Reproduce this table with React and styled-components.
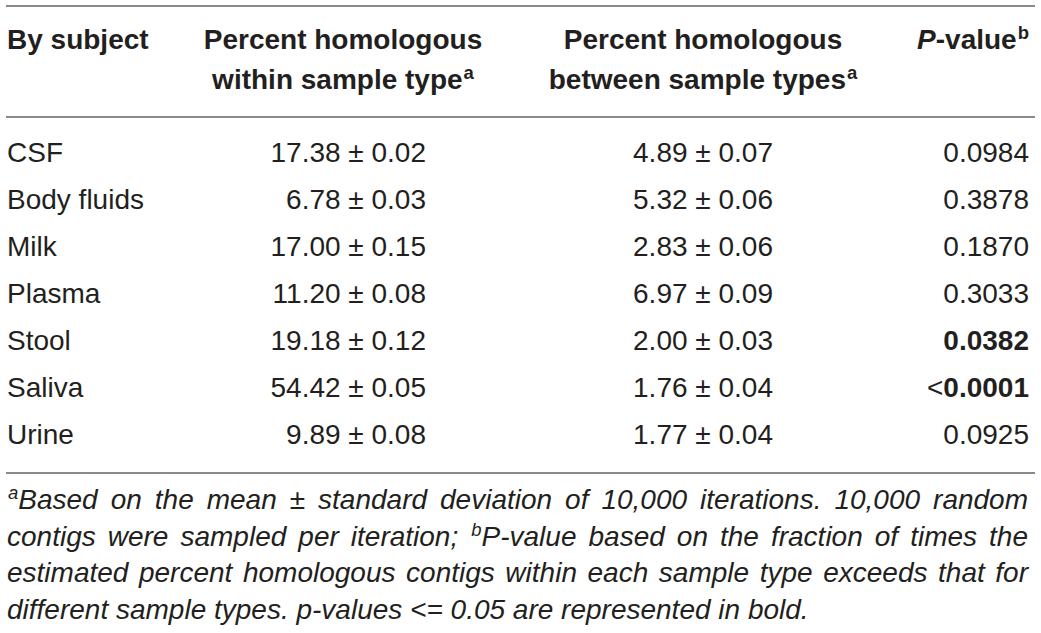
import styled, { createGlobalStyle } from "styled-components";

const GlobalStyle = createGlobalStyle`
  body {
    margin: 0;
    background: #ffffff;
    font-family: "Liberation Sans", Arial, Helvetica, sans-serif;
    color: #231f20;
  }
`;

const Wrapper = styled.div`
  width: 1029px;
  margin-left: 6px;
  padding-top: 5px;
`;

const Row = styled.div`
  display: grid;
  grid-template-columns: 186px 300px 420px 1fr;
  padding: 0 6px 0 1px;
  font-size: 28px;
  white-space: nowrap;
`;

const HeadRow = styled(Row)`
  border-top: 2px solid #8a8a8a;
  border-bottom: 2px solid #8a8a8a;
  padding-top: 13px;
  padding-bottom: 16px;
  line-height: 40px;
  font-weight: bold;
`;

const Body = styled.div`
  padding: 11px 0 14px;
  border-bottom: 2px solid #8a8a8a;
`;

const DataRow = styled(Row)`
  line-height: 47px;
`;

const Cell = styled.div`
  text-align: ${(p) => p.$align || "left"};
  padding-right: ${(p) => p.$pr || 0}px;
`;

const Sup = styled.sup`
  font-size: 0.66em;
  line-height: 0;
  vertical-align: 0.55em;
  margin-left: 1px;
`;

const Strong = styled.span`
  font-weight: bold;
`;

const Note = styled.div`
  padding: 8px 7px 0 1px;
  font-size: 28px;
  line-height: 36.7px;
  font-style: italic;
`;

const NoteLine = styled.div`
  text-align: justify;
  text-align-last: ${(p) => (p.$last ? "left" : "justify")};
  white-space: nowrap;
`;

const rows = [
  ["CSF", "17.38 ± 0.02", "4.89 ± 0.07", "0.0984"],
  ["Body fluids", "6.78 ± 0.03", "5.32 ± 0.06", "0.3878"],
  ["Milk", "17.00 ± 0.15", "2.83 ± 0.06", "0.1870"],
  ["Plasma", "11.20 ± 0.08", "6.97 ± 0.09", "0.3033"],
  ["Stool", "19.18 ± 0.12", "2.00 ± 0.03", <Strong>0.0382</Strong>],
  [
    "Saliva",
    "54.42 ± 0.05",
    "1.76 ± 0.04",
    <>
      {"<"}
      <Strong>0.0001</Strong>
    </>,
  ],
  ["Urine", "9.89 ± 0.08", "1.77 ± 0.04", "0.0925"],
];

export default function App() {
  return (
    <>
      <GlobalStyle />
      <Wrapper>
        <HeadRow>
          <Cell>By subject</Cell>
          <Cell $align="center">
            Percent homologous
            <br />
            within sample type<Sup>a</Sup>
          </Cell>
          <Cell $align="center">
            Percent homologous
            <br />
            between sample types<Sup>a</Sup>
          </Cell>
          <Cell $align="right">
            <i>P</i>-value<Sup>b</Sup>
          </Cell>
        </HeadRow>
        <Body>
          {rows.map((r) => (
            <DataRow key={r[0]}>
              <Cell>{r[0]}</Cell>
              <Cell $align="right" $pr={67}>
                {r[1]}
              </Cell>
              <Cell $align="center">{r[2]}</Cell>
              <Cell $align="right">{r[3]}</Cell>
            </DataRow>
          ))}
        </Body>
        <Note>
          <NoteLine>
            <Sup>a</Sup>Based on the mean ± standard deviation of 10,000 iterations. 10,000 random
          </NoteLine>
          <NoteLine>
            contigs were sampled per iteration; <Sup>b</Sup>P-value based on the fraction of times the
          </NoteLine>
          <NoteLine>
            estimated percent homologous contigs within each sample type exceeds that for
          </NoteLine>
          <NoteLine $last>
            different sample types. p-values {"<="} 0.05 are represented in bold.
          </NoteLine>
        </Note>
      </Wrapper>
    </>
  );
}
